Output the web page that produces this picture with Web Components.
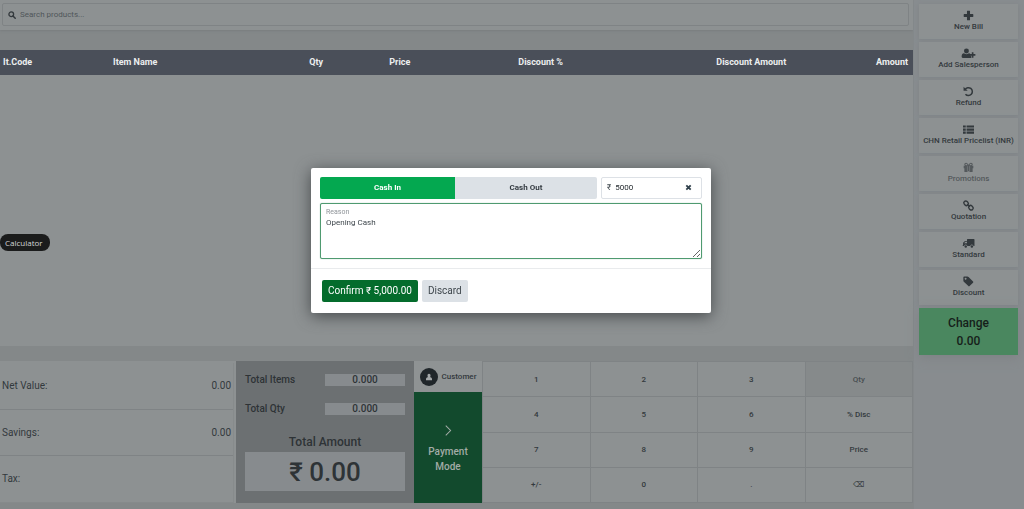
<!DOCTYPE html>
<html lang="en">
<head>
<meta charset="utf-8">
<title>Point of Sale</title>
<meta name="viewport" content="width=device-width, initial-scale=1">
<style>
  :root {
    --panel: #8d9192;
    --gap: #848889;
    --line: #7f8385;
    --ink: #33393d;
    --head: #4a4f59;
  }
  html, body { height: 100%; margin: 0; }
  body { font-family: Roboto, "Noto Sans", sans-serif; font-size: 10px; color: var(--ink); background: var(--gap); }
</style>
</head>
<body>
<pos-app></pos-app>
<script>
const icons = {
  search: '<circle cx="6.5" cy="6.5" r="4.7" fill="none" stroke="currentColor" stroke-width="2.6"/><path d="M10 10l4.500 4.500" stroke="currentColor" stroke-width="3" stroke-linecap="round"/>',
  plus: '<path d="M6.400 1h3.200q.6 0 .6.600v4.200h4.200q.6 0 .6.600v3.200q0 .6-.6.600h-4.200v4.200q0 .6-.6.600H6.400q-.6 0-.6-.6v-4.200H1.600q-.6 0-.6-.6V6.400q0-.6.600-.6h4.200V1.600q0-.6.600-.6z" fill="currentColor"/>',
  person: '<circle cx="5" cy="4.500" r="3.600" fill="currentColor"/><path d="M-2 12.500c0-3 1.500-4.700 3.200-4.700 2 1.600 5.600 1.600 7.600 0 .8 0 1.300.3 1.700.7v2.500h1.500v3.500H-.3C-1.400 14.500-2 13.700-2 12.500z" fill="currentColor"/><path d="M14 6v8M10 10h8" stroke="currentColor" stroke-width="2.400"/>',
  undo: '<path d="M3 5.200A5.700 5.700 0 1 1 3.600 11.900" fill="none" stroke="currentColor" stroke-width="2.200"/><path d="M.8 1v6h6z" fill="currentColor"/>',
  list: '<path d="M0 2h4v3.200H0zM5.200 2H16v3.200H5.200zM0 6.500h4v3.200H0zM5.200 6.500H16v3.200H5.200zM0 11h4v3.200H0zM5.200 11H16v3.200H5.200z" fill="currentColor"/>',
  gift: '<path d="M1 5.500h14v3.700H1zM2 9.200h4.500V14.500H2.800q-.8 0-.8-.8zM9.500 9.200H14v4.500q0 .8-.8.800H9.500zM6.500 9h3v4.500h-3z" fill="currentColor"/><path d="M8 5.500C6.500 2.500 5.500 1.800 4.500 1.800a1.800 1.800 0 0 0 0 3.700zM8 5.500c1.500-3 2.500-3.700 3.500-3.700a1.800 1.800 0 0 1 0 3.700z" fill="none" stroke="currentColor" stroke-width="1.600"/><path d="M6.400 6v7.500M9.600 6v7.500" stroke="#8d9192" stroke-width=".7"/>',
  link: '<g fill="none" stroke="currentColor" stroke-width="2"><rect x="1" y="2" width="7" height="5.600" rx="2.800" transform="rotate(45 4.500 4.800)"/><rect x="8" y="8.400" width="7" height="5.600" rx="2.800" transform="rotate(45 11.500 11.200)"/><path d="M6 6l4 4"/></g>',
  truck: '<path d="M6.500 1.500H16q.7 0 .7.700v9.500h-1.500a2.300 2.300 0 0 0-4.600 0H6.300a2.300 2.300 0 0 0-4.600 0H-.5v-1h.6V7L2.900 4.300H5.800V2.200q0-.7.700-.7zM1.600 7.500h4.200V5.400H3.500z" fill="currentColor" fill-rule="evenodd"/><circle cx="4" cy="12.300" r="1.800" fill="currentColor"/><circle cx="12.900" cy="12.300" r="1.800" fill="currentColor"/>',
  tag: '<path d="M.5 2q0-1.300 1.300-1.300h4.600q1 0 1.700.7l6.500 6.500q.9.900 0 1.800l-5 5q-.9.900-1.800 0L1.200 8.200Q.5 7.500.5 6.500zM3.800 2.600a1.300 1.300 0 1 0 .01 0z" fill="currentColor" fill-rule="evenodd"/>',
  chevron: '<path d="M4 1l7 7-7 7" fill="none" stroke="currentColor" stroke-width="1.500"/>',
  close: '<path d="M3 3l10 10M13 3L3 13" stroke="currentColor" stroke-width="4.200"/>',
  user: '<path d="M8 1.500c2 0 3 1.500 3 3.500S10 9 8 9 5 7 5 5s1-3.500 3-3.500zM2 14.500V12q0-2.500 2.500-3.500h7Q14 9.500 14 12v2.500z" fill="currentColor"/>'
};

function define(name, html) {
  const template = document.createElement('template');
  template.innerHTML = '<style>*,*::before,*::after{box-sizing:border-box}button,input,textarea{font:inherit;color:inherit;margin:0;border:0;border-radius:0;padding:0}</style>' + html;
  customElements.define(name, class extends HTMLElement {
    constructor() {
      super();
      this.attachShadow({ mode: 'open' }).append(template.content.cloneNode(true));
    }
  });
}

customElements.define('pos-icon', class extends HTMLElement {
  constructor() {
    super();
    this.attachShadow({ mode: 'open' });
  }
  connectedCallback() {
    this.shadowRoot.innerHTML = `<style>:host{display:block;flex:none;width:var(--icon,11px);height:var(--icon,11px)}svg{display:block;width:100%;height:100%;overflow:visible}</style>
      <svg viewBox="0 0 16 16" aria-hidden="true">${icons[this.getAttribute('name')]}</svg>`;
  }
});

define('pos-search', `<style>
  :host { display: block; padding: 3px 4px 4px 2px; background: var(--panel); box-shadow: 0 1px 2px #797d7f; }
  label { display: flex; align-items: center; gap: 4px; height: 23px; padding: 0 5px; border: 1px solid var(--line); border-radius: 2px; --icon: 8px; }
  input { flex: 1; min-width: 0; background: none; font-size: 8px; outline: none; }
  input::placeholder { color: #50565a; opacity: 1; }
</style>
<label><pos-icon name="search"></pos-icon><input type="text" placeholder="Search products..." aria-label="Search products"></label>`);

define('pos-lines', `<style>
  :host { display: block; background: var(--panel); }
  table { width: 100%; table-layout: fixed; border-collapse: collapse; }
  th { height: 25px; padding: 0 3px 2px; background: var(--head); color: #eceeef; font-size: 9px; font-weight: 700; line-height: 12px; text-align: left; white-space: nowrap; }
  th:last-child { text-align: right; padding-right: 5px; }
</style>
<table>
  <colgroup><col style="width:110px"><col style="width:21.5%"><col style="width:80px"><col style="width:129px"><col style="width:198px"><col><col style="width:60px"></colgroup>
  <thead><tr><th>It.Code</th><th>Item Name</th><th>Qty</th><th>Price</th><th>Discount %</th><th>Discount Amount</th><th>Amount</th></tr></thead><tbody></tbody>
</table>`);

define('pos-summary', `<style>
  :host { display: flex; flex-direction: column; padding: 2px 2px 0 0; background: var(--panel); }
  dl { display: flex; flex: 1; flex-direction: column; margin: 0; border-right: 1px solid #878b8c; }
  div { display: flex; flex: 1; align-items: center; justify-content: space-between; padding: 0 2px; border-bottom: 1px solid #7f8385; }
  div:last-child { border-color: #868a8b; }
  dt, dd { margin: 0; font-size: 10px; line-height: 12px; }
</style>
<dl><div><dt>Net Value:</dt><dd>0.00</dd></div><div><dt>Savings:</dt><dd>0.00</dd></div><div><dt>Tax:</dt><dd></dd></div></dl>`);

define('pos-total', `<style>
  :host { display: flex; flex-direction: column; padding: 13px 9px 12px; background: #6c7072; color: #2e3336; font-weight: 500; }
  .row { display: grid; grid-template-columns: 1fr 1fr; align-items: center; margin-bottom: 17px; line-height: 12px; }
  output { display: block; background: #878b8e; text-align: center; }
  h2 { margin: 3px 0; font-size: 12px; line-height: 14px; font-weight: 500; text-align: center; }
  .sum { display: grid; place-items: center; flex: 1; font-size: 26px; line-height: 30px; }
</style>
<div class="row"><span>Total Items</span><output>0.000</output></div>
<div class="row"><span>Total Qty</span><output>0.000</output></div>
<h2>Total Amount</h2><output class="sum">₹ 0.00</output>`);

define('pos-pay', `<style>
  :host { display: flex; flex-direction: column; }
  button { display: flex; align-items: center; justify-content: center; }
  .customer { gap: 4px; height: 31px; background: #8f9394; font-size: 8px; font-weight: 500; }
  .avatar { display: grid; place-items: center; width: 18px; height: 18px; border-radius: 50%; background: #20262a; color: #a4a8aa; --icon: 8px; }
  .pay { flex: 1; flex-direction: column; gap: 8px; padding-top: 3px; background: #124a2d; color: #a3aca7; font-weight: 500; line-height: 15px; }
</style>
<button class="customer"><span class="avatar"><pos-icon name="user"></pos-icon></span>Customer</button>
<button class="pay"><pos-icon name="chevron"></pos-icon><span>Payment<br>Mode</span></button>`);

define('pos-numpad', `<style>
  :host { display: grid; grid-template-columns: repeat(4, 1fr); grid-auto-rows: 1fr; gap: 1px; padding: 1px; background: var(--line); }
  button { background: var(--panel); font-size: 8px; font-weight: 500; }
  .active { background: #868a8b; color: #484e51; }
</style>` + ['1','2','3','Qty','4','5','6','% Disc','7','8','9','Price','+/-','0','.','⌫'].map(k => `<button${k === 'Qty' ? ' class="active"' : ''}>${k}</button>`).join(''));

define('pos-action', `<style>
  :host { display: block; }
  button { display: flex; flex-direction: column; align-items: center; justify-content: center; gap: 1px; width: 100%; height: 35px; padding-bottom: 2px; background: var(--panel); box-shadow: 0 1px 4px #7f8386; font-size: 8px; line-height: 10px; font-weight: 500; white-space: nowrap; }
  :host([muted]) button { color: #54595c; }
</style>
<button><slot name="icon"></slot><span><slot></slot></span></button>`);

define('pos-sidebar', `<style>
  :host { display: flex; flex-direction: column; gap: 3px; padding: 4px 6px 4px 5px; background: #888c8f; border-left: 1px solid #84888a; }
  .change { margin: 0; padding: 6px 0 5px; background: #4a875f; box-shadow: 0 3px 10px #7f8386; color: #161e1a; font-size: 12px; line-height: 18px; font-weight: 500; text-align: center; }
</style>` + [['plus','New Bill'],['person','Add Salesperson'],['undo','Refund'],['list','CHN Retail Pricelist (INR)'],['gift','Promotions'],['link','Quotation'],['truck','Standard'],['tag','Discount']]
  .map(([i, t]) => `<pos-action${i === 'gift' ? ' muted' : ''}><pos-icon slot="icon" name="${i}"></pos-icon>${t}</pos-action>`).join('') +
  `<p class="change">Change<br>0.00</p>`);

define('cash-dialog', `<style>
  :host { position: fixed; inset: 0; display: flex; justify-content: center; align-items: flex-start; padding: 33vh 2px 0 0; }
  dialog { position: static; width: 400px; margin: 0; padding: 0; border: 0; border-radius: 2px; background: #fff; color: #3f474d; box-shadow: 0 3px 16px #45494b; }
  .body { display: grid; gap: 4px; padding: 9px; border-bottom: 1px solid #e9ebed; }
  .row { display: flex; gap: 4px; height: 22px; font-size: 8px; }
  .tabs { display: flex; flex: 1; }
  .tabs button { flex: 142; background: #dce1e6; border-radius: 0 2px 2px 0; color: #343b41; font-weight: 700; }
  .tabs .on { flex: 135; background: #04a850; border-radius: 2px 0 0 2px; color: #fff; }
  .amount { display: flex; align-items: center; gap: 4px; width: 101px; padding: 0 9px 0 5px; border: 1px solid #dde1e6; border-radius: 2px; --icon: 7px; }
  .amount input { flex: 1; min-width: 0; background: none; outline: none; color: #22282d; }
  .amount button { background: none; color: #2f3f4a; }
  .reason { position: relative; }
  .reason label { position: absolute; left: 6px; top: 5px; color: #8f9499; font-size: 7px; line-height: 9px; }
  textarea { display: block; width: 100%; height: 56px; padding: 14px 5px 0; border: 1px solid #4f9a70; border-radius: 2px; background: #fff; box-shadow: 0 0 1px #6fae8b; outline: none; font-size: 8px; line-height: 10px; resize: vertical; }
  footer { display: flex; gap: 4px; padding: 11px; }
  footer button { height: 22px; padding: 0 6px; border-radius: 2px; background: #dce1e6; font-size: 10px; }
  footer .confirm { background: #046c2c; color: #fff; }
</style>
<dialog open aria-label="Cash In/Out">
  <div class="body">
    <div class="row"><div class="tabs"><button class="on">Cash In</button><button>Cash Out</button></div>
      <div class="amount"><label for="amount">₹</label><input id="amount" type="text" value="5000"><button aria-label="Clear amount"><pos-icon name="close"></pos-icon></button></div></div>
    <div class="reason"><textarea id="reason">Opening Cash</textarea><label for="reason">Reason</label></div>
  </div>
  <footer><button class="confirm">Confirm ₹ 5,000.00</button><button>Discard</button></footer>
</dialog>`);

define('pos-tooltip', `<style>
  :host { position: fixed; left: 0; top: 46vh; padding: 3px 7px 3px 5px; border-radius: 8px; background: #1b1c1c; color: #d4d6d6; font: 8px/11px "Open Sans", "Noto Sans", sans-serif; }
</style><slot></slot>`);

define('pos-app', `<style>
  :host { display: grid; grid-template-columns: minmax(0, 1fr) 111px; min-height: 100vh; }
  main { display: flex; flex-direction: column; padding-bottom: 6px; }
  pos-lines { flex: 1; margin: 20px 0 15px; }
  .bottom { display: grid; grid-template-columns: 236fr 178fr 68fr 431fr; min-height: 142px; }
</style>
<main>
  <pos-search></pos-search>
  <pos-lines></pos-lines>
  <div class="bottom"><pos-summary></pos-summary><pos-total></pos-total><pos-pay></pos-pay><pos-numpad></pos-numpad></div>
</main>
<pos-sidebar></pos-sidebar>
<pos-tooltip>Calculator</pos-tooltip>
<cash-dialog></cash-dialog>`);
</script>
</body>
</html>
